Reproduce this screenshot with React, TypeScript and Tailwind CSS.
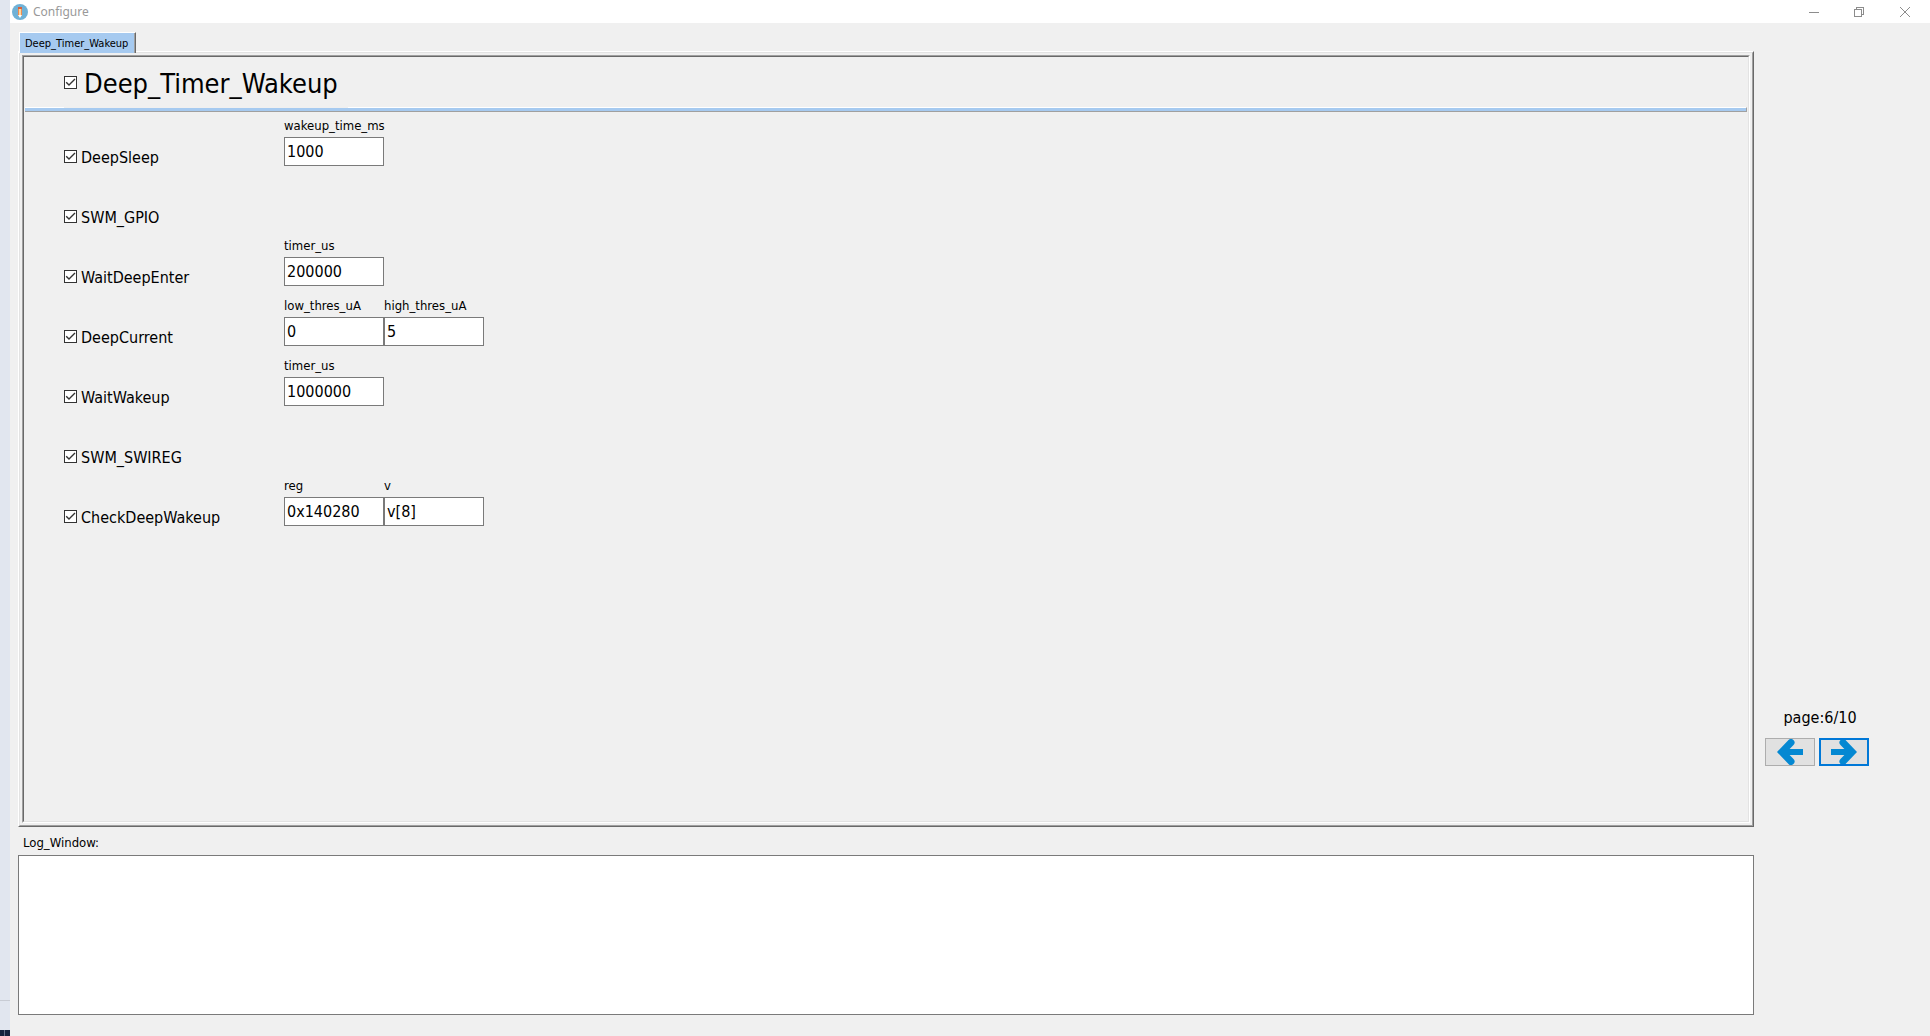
import { useState } from 'react';

type Field = { name: string; value: string };
type Step = { name: string; fields: Field[] };

const steps: Step[] = [
  { name: 'DeepSleep', fields: [{ name: 'wakeup_time_ms', value: '1000' }] },
  { name: 'SWM_GPIO', fields: [] },
  { name: 'WaitDeepEnter', fields: [{ name: 'timer_us', value: '200000' }] },
  {
    name: 'DeepCurrent',
    fields: [
      { name: 'low_thres_uA', value: '0' },
      { name: 'high_thres_uA', value: '5' },
    ],
  },
  { name: 'WaitWakeup', fields: [{ name: 'timer_us', value: '1000000' }] },
  { name: 'SWM_SWIREG', fields: [] },
  {
    name: 'CheckDeepWakeup',
    fields: [
      { name: 'reg', value: '0x140280' },
      { name: 'v', value: 'v[8]' },
    ],
  },
];

function CheckBox({ id }: { id: string }) {
  const [checked, setChecked] = useState(true);
  return (
    <span className="grid size-[13px] shrink-0 place-items-center">
      <input
        id={id}
        type="checkbox"
        checked={checked}
        onChange={(e) => setChecked(e.target.checked)}
        className="col-start-1 row-start-1 size-[13px] appearance-none border border-[#333333] bg-white"
      />
      {checked && (
        <svg viewBox="0 0 13 13" className="pointer-events-none col-start-1 row-start-1 size-[13px]" fill="none" stroke="#333" strokeWidth="1.4">
          <path d="M2.2 6.3 5 9.1 11 3.1" />
        </svg>
      )}
    </span>
  );
}

function AppIcon() {
  return (
    <svg viewBox="0 0 16 16" className="size-4" aria-hidden="true">
      <circle cx="8" cy="8" r="8" fill="#6fb1d6" />
      <rect x="6" y="3" width="4" height="2" fill="#d9603b" />
      <rect x="6" y="5" width="4" height="7" fill="#f08c4e" />
      <rect x="7" y="5" width="2" height="6" fill="#fbd9a0" />
      <path d="M6 11h4l-2 3z" fill="#fff" />
    </svg>
  );
}

function TitleBar() {
  return (
    <header className="flex h-[23px] items-center bg-white pr-0.5 pl-0.5">
      <AppIcon />
      <h1 className="ml-[5px] flex-1 pt-px font-['Noto_Sans',sans-serif] text-xs text-[#999999]">Configure</h1>
      <div className="flex text-[#8c8c8c]">
        <button aria-label="Minimize" className="grid h-[21px] w-[45px] place-items-center">
          <svg viewBox="0 0 10 10" className="size-2.5" fill="none" stroke="currentColor" shapeRendering="crispEdges">
            <path d="M0 5.5h10" />
          </svg>
        </button>
        <button aria-label="Restore" className="grid h-[21px] w-[46px] place-items-center">
          <svg viewBox="0 0 10 10" className="size-2.5" fill="none" stroke="currentColor" shapeRendering="crispEdges">
            <path d="M.5 2.5h7v7h-7zM2.5 2.5v-2h7v7h-2" />
          </svg>
        </button>
        <button aria-label="Close" className="grid h-[21px] w-[46px] place-items-center">
          <svg viewBox="0 0 10 10" className="size-2.5" fill="none" stroke="currentColor">
            <path d="M0 0l10 10M10 0L0 10" />
          </svg>
        </button>
      </div>
    </header>
  );
}

function ArrowLeft({ className }: { className: string }) {
  return (
    <svg viewBox="0 0 26 26" className={className} fill="none" stroke="#0488d2" aria-hidden="true">
      <path d="M14 3.5 4.8 13l9.2 9.5" strokeWidth="7" strokeLinecap="round" />
      <path d="M7 13h19" strokeWidth="6" />
    </svg>
  );
}

function StepRow({ step }: { step: Step }) {
  return (
    <li className="flex h-[60px]">
      <div className="flex w-[220px] items-center gap-1 pt-[19px]">
        <CheckBox id={step.name} />
        <label htmlFor={step.name} className="pt-0.5 text-base">
          {step.name}
        </label>
      </div>
      {step.fields.map((field) => (
        <div key={field.name} className="w-[100px]">
          <label htmlFor={`${step.name}-${field.name}`} className="block h-5 text-[13px] leading-[18px] whitespace-nowrap">
            {field.name}
          </label>
          <input
            id={`${step.name}-${field.name}`}
            type="text"
            defaultValue={field.value}
            className="block h-[29px] w-full border border-[#7a7a7a] bg-white px-0.5 text-base outline-none"
          />
        </div>
      ))}
    </li>
  );
}

export default function App() {
  return (
    <div className="flex min-h-screen bg-[#f0f0f0] font-['DejaVu_Sans_Condensed','DejaVu_Sans',sans-serif] text-black">
      <div className="flex w-[10px] shrink-0 flex-col justify-end bg-[#e1e6ef]">
        <div className="h-[30px] border-t border-[#c8ccd4]" />
        <div className="flex h-1.5 bg-[#14213d]">
          <div className="ml-1 w-px bg-[#5d6a84]" />
        </div>
      </div>

      <div className="flex min-w-0 flex-1 flex-col">
        <TitleBar />
        <main className="flex flex-1 flex-col pb-[21px] pl-2">
          <div className="flex flex-1">
            <div className="flex min-w-0 flex-1 flex-col pt-[9px]">
              <div role="tablist" className="z-10 -mb-0.5 flex pl-px">
                <button
                  role="tab"
                  aria-selected="true"
                  className="h-[21px] border-t border-r border-l border-t-white border-r-[#696969] border-l-white"
                >
                  <span className="block h-full border-r border-[#a0a0a0] bg-[#a6caf0] pr-1.5 pl-[5px] text-[11px] leading-[22px]">
                    Deep_Timer_Wakeup
                  </span>
                </button>
              </div>

              <div className="flex flex-1 flex-col border border-t-white border-r-[#696969] border-b-[#696969] border-l-white">
                <div className="flex flex-1 flex-col border border-t-[#e3e3e3] border-r-[#a0a0a0] border-b-[#a0a0a0] border-l-[#e3e3e3] p-0.5">
                  <div className="flex flex-1 flex-col border border-t-[#a0a0a0] border-r-white border-b-white border-l-[#a0a0a0]">
                    <section className="flex-1 border border-t-[#696969] border-r-[#e3e3e3] border-b-[#e3e3e3] border-l-[#696969]">
                      <div className="relative -mb-px ml-10 flex h-[51px] w-fit items-center gap-[7px] bg-[#f0f0f0] pr-2.5">
                        <CheckBox id="page-enabled" />
                        <label htmlFor="page-enabled" className="pt-0.5 text-[27px] leading-[34px]">
                          Deep_Timer_Wakeup
                        </label>
                      </div>
                      <div className="mx-px h-[5px] border-t border-r border-b border-t-white border-r-[#a0a0a0] border-b-[#a0a0a0] bg-[#a6caf0]" />
                      <ul className="pt-[5px] pl-10">
                        {steps.map((step) => (
                          <StepRow key={step.name} step={step} />
                        ))}
                      </ul>
                    </section>
                  </div>
                </div>
              </div>
            </div>

            <nav aria-label="Pages" className="flex w-[176px] shrink-0 flex-col justify-end pb-[61px] pl-[11px]">
              <p className="mb-2 w-[110px] text-center text-base">page:6/10</p>
              <div className="flex gap-1">
                <button aria-label="Previous page" className="flex h-7 w-[50px] items-center justify-center overflow-hidden border border-[#adadad] bg-[#e1e1e1]">
                  <ArrowLeft className="size-[26px] shrink-0" />
                </button>
                <button aria-label="Next page" className="flex h-7 w-[50px] items-center justify-center overflow-hidden border-2 border-[#0078d7] bg-[#e1e1e1]">
                  <ArrowLeft className="size-[26px] shrink-0 rotate-180" />
                </button>
              </div>
            </nav>
          </div>

          <div className="mr-[176px]">
            <label htmlFor="log" className="block h-7 pt-1.5 pl-[5px] text-[13px] leading-5">
              Log_Window:
            </label>
            <textarea id="log" className="block h-[160px] w-full resize-none border border-[#7a7a7a] bg-white outline-none" />
          </div>
        </main>
      </div>
    </div>
  );
}
